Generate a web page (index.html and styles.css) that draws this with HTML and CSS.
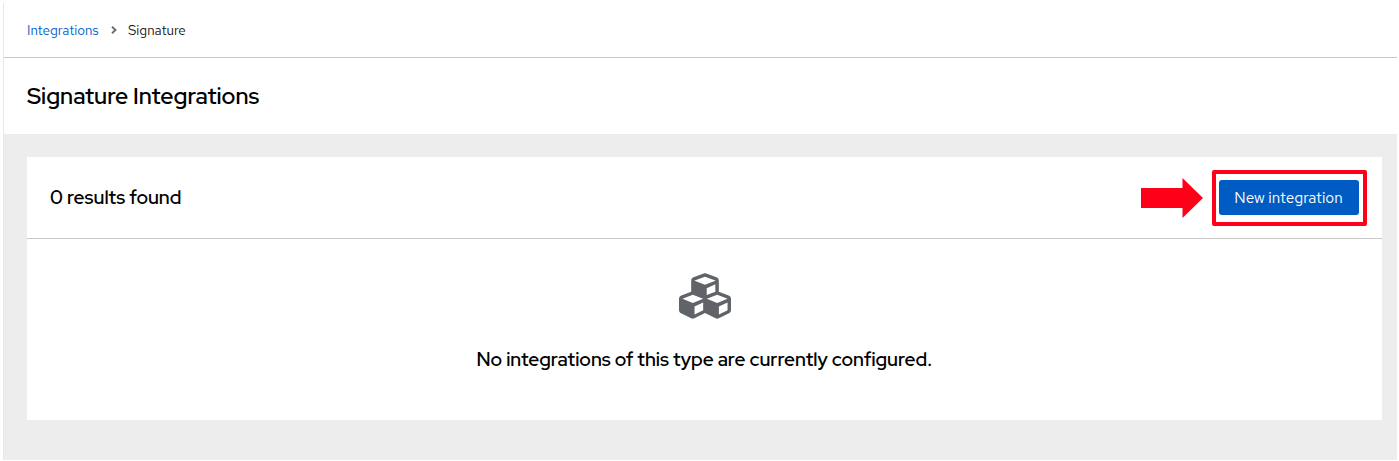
FILE: index.html
```html
<!DOCTYPE html>
<html lang="en">
<head>
<meta charset="utf-8">
<title>Signature Integrations</title>
<link rel="stylesheet" href="styles.css">
</head>
<body>
<div class="page">
  <nav class="breadcrumb">
    <a class="crumb-link" href="#">Integrations</a>
    <svg class="chevron" viewBox="0 0 6 8"><path d="M1 .8 4.500 4 1 7.200" fill="none" stroke="#6a6e73" stroke-width="1.900"/></svg>
    <span class="crumb-current">Signature</span>
  </nav>
  <header class="title-bar"><h1 class="title">Signature Integrations</h1></header>
  <main class="content">
    <section class="card">
      <div class="toolbar">
        <h2 class="results">0 results found</h2>
        <div class="actions">
          <svg class="arrow" viewBox="0 0 62 40"><path d="M0 10H41.500V0L62 20 41.500 40V30H0Z" fill="#ff0019"/></svg>
          <div class="highlight"><button class="primary">New integration</button></div>
        </div>
      </div>
      <div class="empty">
        <svg class="cubes" viewBox="0 32 512 448"><path fill="#606469" d="M488.6 250.2L392 214V105.500c0-15-9.300-28.400-23.400-33.700l-100-37.500c-8.100-3.100-17.100-3.100-25.300 0l-100 37.500c-14.100 5.300-23.400 18.700-23.400 33.700V214l-96.600 36.200C9.300 255.500 0 268.900 0 283.900V394c0 13.600 7.700 26.100 19.900 32.200l100 50c10.100 5.100 22.100 5.100 32.200 0l103.900-52 103.900 52c10.100 5.100 22.100 5.100 32.200 0l100-50c12.200-6.100 19.900-18.600 19.900-32.200V283.900c0-15-9.300-28.400-23.400-33.700zM358 214.800l-85 31.900v-68.200l85-37v73.300zM154 104.100l102-38.200 102 38.200v.6l-102 41.400-102-41.400v-.6zm84 291.100l-85 42.500v-79.100l85-38.800v75.400zm0-112l-102 41.400-102-41.400v-.6l102-38.200 102 38.200v.6zm240 112l-85 42.500v-79.100l85-38.800v75.400zm0-112l-102 41.400-102-41.400v-.6l102-38.200 102 38.200v.6z"/></svg>
        <p class="message">No integrations of this type are currently configured.</p>
      </div>
    </section>
  </main>
</div>
</body>
</html>
```
FILE: styles.css
```css
* { box-sizing: border-box; }
body {
  margin: 0;
  height: 461px;
  padding: 3px 2px 1px 3px;
  background: #fff;
  color: #151515;
  font-family: "Red Hat Text", Inter, "Liberation Sans", sans-serif;
}
.page {
  display: flex;
  flex-direction: column;
  height: 457px;
  border-left: 1px solid #e8e8e8;
}
.breadcrumb {
  display: flex;
  align-items: center;
  height: 55px;
  padding-left: 23px;
  border-bottom: 1px solid #c9c9c9;
  font-size: 13.44px;
  line-height: 20px;
}
.crumb-link { color: #0060cc; text-decoration: none; width: 72px; white-space: nowrap; }
.chevron { width: 6px; height: 8px; margin: 0 11px 0 12px; }
.title-bar { display: flex; align-items: center; height: 76px; padding-left: 23px; }
.title, .results, .message { font-family: "Red Hat Display", "Red Hat Text", Inter, sans-serif; font-weight: 600; color: #000; }
.title { margin: 0; font-size: 23.04px; line-height: 30px; padding-bottom: 1px; }
.content { flex: 1; padding: 23px 15.5px 40px 23px; background: #ededed; }
.card { height: 263px; background: #fff; }
.toolbar {
  display: flex;
  align-items: center;
  justify-content: space-between;
  height: 82px;
  padding: 0 15px 0 23px;
  border-bottom: 1px solid #c9c9c9;
}
.results { margin: 0; padding-bottom: 2px; font-size: 19.2px; }
.actions { display: flex; align-items: center; gap: 9px; }
.arrow { width: 62px; height: 40px; }
.highlight { padding: 6px 4px 7px 3px; border: 4px solid #ff0019; border-radius: 2px; }
.primary {
  display: block;
  width: 140px;
  height: 35px;
  padding: 0;
  border: 0;
  border-radius: 3px;
  background: #005cc3;
  color: #fff;
  font: 450 15.36px/35px "Red Hat Text", Inter, "Liberation Sans", sans-serif;
}
.empty { display: flex; flex-direction: column; align-items: center; padding-top: 34px; }
.cubes { width: 52px; height: 46px; margin-left: 1px; }
.message { margin: 27px 0 0; font-size: 19.2px; line-height: 26px; }
```
